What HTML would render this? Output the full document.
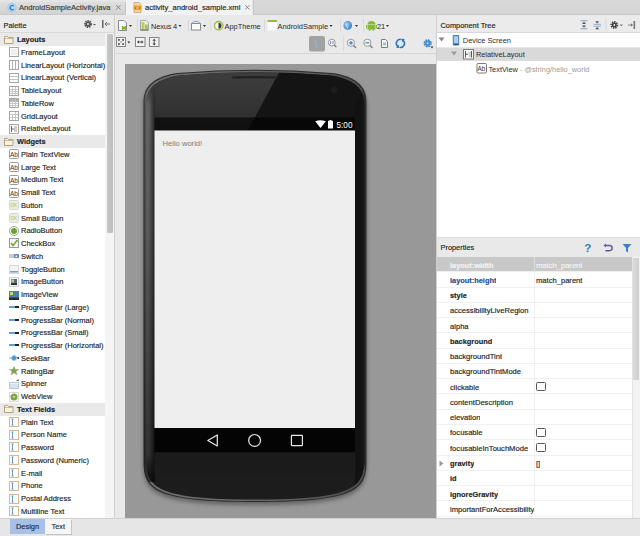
<!DOCTYPE html>
<html><head><meta charset="utf-8">
<style>
*{margin:0;padding:0;box-sizing:border-box}
html,body{width:640px;height:536px;overflow:hidden;background:#e8e8e8;font-family:"Liberation Sans",sans-serif;font-size:7.4px;color:#1e1e1e;-webkit-text-stroke:0.15px currentColor}
.a{position:absolute}
.t{position:absolute;white-space:pre;line-height:10px}
.b{font-weight:bold}
</style></head><body>
<!-- TAB BAR -->
<div class="a" style="left:0;top:0;width:640px;height:15px;background:#e6e6e6"></div>
<div class="a" style="left:0;top:2px;width:126px;height:12.5px;background:linear-gradient(#dedede,#d2d2d2);border-right:1px solid #c4c4c4"></div>
<div class="a" style="left:126px;top:0;width:126px;height:15px;background:#f2f2f2"></div>
<div class="a" style="left:253px;top:0;width:387px;height:14.5px;background:linear-gradient(#dadada,#d4d4d4);border-left:1px solid #c8c8c8;border-bottom-left-radius:2px"></div>
<div class="a" style="left:0;top:14px;width:126px;height:1px;background:#c9c9c9"></div>
<div class="a" style="left:253px;top:14px;width:387px;height:1px;background:#c9c9c9"></div>
<svg class="a" style="left:7px;top:3px" width="10" height="10" viewBox="0 0 10 10"><circle cx="5" cy="4.6" r="4.2" fill="#b4dcf6" stroke="#8cc4ec" stroke-width="0.8"/><path d="M6.7 3.1A2.1 2.1 0 1 0 6.7 6.1" stroke="#3a74b4" stroke-width="1.3" fill="none"/></svg>
<div class="t" style="left:19px;top:2.5px;color:#3a3a3a;font-size:7.6px">AndroidSampleActivity.java</div>
<svg class="a" style="left:115px;top:4px" width="7" height="7" viewBox="0 0 7 7"><path d="M1.2 1.2l4.3 4.3M5.5 1.2l-4.3 4.3" stroke="#7a7a7a" stroke-width="0.9"/></svg>
<svg class="a" style="left:133px;top:2px" width="10" height="11" viewBox="0 0 10 11"><path d="M1 0.5h5l2 2v8h-7z" fill="#f3d9a0" stroke="#b8a078" stroke-width="0.8"/><rect x="0.5" y="3.5" width="8" height="4.5" fill="#f0b040"/><path d="M3.3 4.3l-1.6 1.5l1.6 1.5M5.7 4.3l1.6 1.5l-1.6 1.5" stroke="#c84818" stroke-width="0.9" fill="none"/></svg>
<div class="t" style="left:145px;top:2.5px;color:#222;font-size:7.6px">activity_android_sample.xml</div>
<svg class="a" style="left:243.5px;top:4px" width="7" height="7" viewBox="0 0 7 7"><path d="M1.2 1.2l4.3 4.3M5.5 1.2l-4.3 4.3" stroke="#7a7a7a" stroke-width="0.9"/></svg>

<!-- PALETTE PANEL -->
<div class="a" style="left:0;top:15px;width:114px;height:503px;background:#fff"></div>
<div class="a" style="left:0;top:15px;width:114px;height:18px;background:#ebebeb;border-bottom:1px solid #d8d8d8"></div>
<div class="t" style="left:3.5px;top:20.6px">Palette</div>
<svg class="a" style="left:83px;top:19px" width="14" height="10" viewBox="0 0 14 10"><circle cx="5" cy="5" r="3" fill="none" stroke="#555" stroke-width="2" stroke-dasharray="1.4 0.8"/><circle cx="5" cy="5" r="2.6" fill="#555"/><circle cx="5" cy="5" r="1" fill="#ebebeb"/><path d="M10 5h3l-1.5 1.5z" fill="#555"/></svg>
<svg class="a" style="left:101px;top:19px" width="10" height="10" viewBox="0 0 10 10"><rect x="1" y="1" width="1.5" height="8" fill="#666"/><path d="M4 5h5M4 5l2-2M4 5l2 2" stroke="#666" stroke-width="0.9" fill="none"/></svg>
<div class="a" style="left:105px;top:33px;width:9px;height:485px;background:#f5f5f5"></div>
<div class="a" style="left:107px;top:34px;width:6px;height:199px;background:linear-gradient(90deg,#c8c8c8,#bdbdbd);border-radius:1px"></div>
<div class="a" style="left:0;top:33.00px;width:105px;height:12.75px;background:#e9e9e9"></div>
<svg class="a" style="left:4px;top:36px;" width="10" height="9" viewBox="0 0 10 9"><path d="M0.5 0.5h3l1 1h4.5v6h-8.5z" fill="#f7f2e6" stroke="#b5a27a" stroke-width="1"/><path d="M1 2.5h8" stroke="#cdbb94" stroke-width="1"/></svg>
<div class="t b" style="left:17px;top:35.30px">Layouts</div>
<svg class="a" style="left:9px;top:47px;" width="10" height="10" viewBox="0 0 10 10"><rect x="0.5" y="0.5" width="9" height="9" fill="#fafafa" stroke="#a6a6a6"/><rect x="2" y="2" width="6" height="6" fill="#efefef"/></svg>
<div class="t" style="left:21px;top:47.75px;font-size:7.5px">FrameLayout</div>
<svg class="a" style="left:9px;top:60px;" width="10" height="10" viewBox="0 0 10 10"><rect x="0.5" y="0.5" width="9" height="9" fill="#fff" stroke="#a6a6a6"/><path d="M3.5 1v8M6.5 1v8" stroke="#b4b4b4"/></svg>
<div class="t" style="left:21px;top:60.50px;font-size:7.5px">LinearLayout (Horizontal)</div>
<svg class="a" style="left:9px;top:73px;" width="10" height="10" viewBox="0 0 10 10"><rect x="0.5" y="0.5" width="9" height="9" fill="#fff" stroke="#a6a6a6"/><path d="M1 3.5h8M1 6.5h8" stroke="#c4c4c4"/></svg>
<div class="t" style="left:21px;top:73.25px;font-size:7.5px">LinearLayout (Vertical)</div>
<svg class="a" style="left:9px;top:86px;" width="10" height="10" viewBox="0 0 10 10"><rect x="0.5" y="0.5" width="9" height="9" fill="#fff" stroke="#a6a6a6"/><path d="M1 3.5h8M1 5.5h8M1 7.5h8M3.5 1v8M6.5 1v8" stroke="#c8c8c8"/></svg>
<div class="t" style="left:21px;top:86.00px;font-size:7.5px">TableLayout</div>
<svg class="a" style="left:9px;top:98px;" width="10" height="10" viewBox="0 0 10 10"><rect x="0.5" y="0.5" width="9" height="9" fill="#fff" stroke="#a6a6a6"/><rect x="1" y="1" width="8" height="3" fill="#b0b0b0"/><path d="M1 5.5h8M1 7.5h8M3.5 1v8M6.5 1v8" stroke="#c8c8c8"/></svg>
<div class="t" style="left:21px;top:98.75px;font-size:7.5px">TableRow</div>
<svg class="a" style="left:9px;top:111px;" width="10" height="10" viewBox="0 0 10 10"><rect x="0.5" y="0.5" width="9" height="9" fill="#fff" stroke="#a6a6a6"/><path d="M1 3.5h8M1 6.5h8M3.5 3v6M6.5 1v8" stroke="#c4c4c4"/></svg>
<div class="t" style="left:21px;top:111.50px;font-size:7.5px">GridLayout</div>
<svg class="a" style="left:9px;top:124px;" width="10" height="10" viewBox="0 0 10 10"><rect x="0.5" y="0.5" width="9" height="9" fill="#fff" stroke="#a6a6a6"/><path d="M2.5 2v6M2 5h4" stroke="#666"/><rect x="5" y="2" width="3" height="6" fill="#ccc"/></svg>
<div class="t" style="left:21px;top:124.25px;font-size:7.5px">RelativeLayout</div>
<div class="a" style="left:0;top:135.00px;width:105px;height:12.75px;background:#e9e9e9"></div>
<svg class="a" style="left:4px;top:138px;" width="10" height="9" viewBox="0 0 10 9"><path d="M0.5 0.5h3l1 1h4.5v6h-8.5z" fill="#f7f2e6" stroke="#b5a27a" stroke-width="1"/><path d="M1 2.5h8" stroke="#cdbb94" stroke-width="1"/></svg>
<div class="t b" style="left:17px;top:137.30px">Widgets</div>
<svg class="a" style="left:9px;top:149px;" width="10" height="10" viewBox="0 0 10 10"><rect x="0.5" y="0.5" width="9" height="9" fill="#fff" stroke="#9a9a9a" rx="1"/><text x="1" y="7.5" font-size="6.5" font-family="Liberation Sans" fill="#333">Ab</text></svg>
<div class="t" style="left:21px;top:149.75px;font-size:7.5px">Plain TextView</div>
<svg class="a" style="left:9px;top:162px;" width="10" height="10" viewBox="0 0 10 10"><rect x="0.5" y="0.5" width="9" height="9" fill="#fff" stroke="#9a9a9a" rx="1"/><text x="1" y="7.5" font-size="6.5" font-family="Liberation Sans" fill="#333">Ab</text></svg>
<div class="t" style="left:21px;top:162.50px;font-size:7.5px">Large Text</div>
<svg class="a" style="left:9px;top:175px;" width="10" height="10" viewBox="0 0 10 10"><rect x="0.5" y="0.5" width="9" height="9" fill="#fff" stroke="#9a9a9a" rx="1"/><text x="1" y="7.5" font-size="6.5" font-family="Liberation Sans" fill="#333">Ab</text></svg>
<div class="t" style="left:21px;top:175.25px;font-size:7.5px">Medium Text</div>
<svg class="a" style="left:9px;top:188px;" width="10" height="10" viewBox="0 0 10 10"><rect x="0.5" y="0.5" width="9" height="9" fill="#fff" stroke="#9a9a9a" rx="1"/><text x="1" y="7.5" font-size="6.5" font-family="Liberation Sans" fill="#333">Ab</text></svg>
<div class="t" style="left:21px;top:188.00px;font-size:7.5px">Small Text</div>
<svg class="a" style="left:9px;top:200px;" width="10" height="10" viewBox="0 0 10 10"><rect x="0.5" y="0.5" width="9" height="9" fill="#ebefdc" stroke="#d6d6d6" rx="1"/><text x="1.5" y="7" font-size="4.5" font-family="Liberation Sans" fill="#a9b87a">OK</text></svg>
<div class="t" style="left:21px;top:200.75px;font-size:7.5px">Button</div>
<svg class="a" style="left:9px;top:213px;" width="10" height="10" viewBox="0 0 10 10"><rect x="0.5" y="0.5" width="9" height="9" fill="#ebefdc" stroke="#d6d6d6" rx="1"/><text x="1.5" y="7" font-size="4.5" font-family="Liberation Sans" fill="#a9b87a">OK</text></svg>
<div class="t" style="left:21px;top:213.50px;font-size:7.5px">Small Button</div>
<svg class="a" style="left:9px;top:226px;" width="10" height="10" viewBox="0 0 10 10"><circle cx="5" cy="5" r="4.5" fill="#fff" stroke="#a0a0a0"/><circle cx="5" cy="5" r="3" fill="#6aa52c"/></svg>
<div class="t" style="left:21px;top:226.25px;font-size:7.5px">RadioButton</div>
<svg class="a" style="left:9px;top:238px;" width="10" height="10" viewBox="0 0 10 10"><rect x="0.5" y="0.5" width="9" height="9" fill="#f4f4f4" stroke="#9a9a9a"/><path d="M2 5l2 2.5l4.5-5.5" stroke="#7aa23c" stroke-width="1.6" fill="none"/></svg>
<div class="t" style="left:21px;top:239.00px;font-size:7.5px">CheckBox</div>
<svg class="a" style="left:9px;top:251px;" width="10" height="10" viewBox="0 0 10 10"><rect x="0" y="3" width="5" height="4" fill="#c9c9c9"/><rect x="5" y="3" width="5" height="4" fill="#6b8bc0"/><rect x="6.5" y="4.5" width="1.5" height="1.5" fill="#fff"/></svg>
<div class="t" style="left:21px;top:251.75px;font-size:7.5px">Switch</div>
<svg class="a" style="left:9px;top:264px;" width="10" height="10" viewBox="0 0 10 10"><rect x="0.5" y="1.5" width="9" height="8" fill="#f3f3f3" stroke="#dadada"/><rect x="1" y="7" width="8" height="1.5" fill="#7f9cc8"/></svg>
<div class="t" style="left:21px;top:264.50px;font-size:7.5px">ToggleButton</div>
<svg class="a" style="left:9px;top:277px;" width="10" height="10" viewBox="0 0 10 10"><rect x="0.5" y="0.5" width="9" height="9" fill="#f8f8f8" stroke="#d0d0d0"/><rect x="2" y="2" width="6" height="6" fill="#556b78"/><rect x="2.5" y="2.5" width="2.5" height="3" fill="#c8d27a"/><rect x="2" y="6.5" width="6" height="1.5" fill="#222"/></svg>
<div class="t" style="left:21px;top:277.25px;font-size:7.5px">ImageButton</div>
<svg class="a" style="left:9px;top:290px;" width="10" height="10" viewBox="0 0 10 10"><rect x="0" y="1" width="10" height="9" fill="#4a7fb0"/><rect x="1" y="2" width="3" height="3" fill="#c9d57a"/><rect x="0" y="7.5" width="10" height="2.5" fill="#2a2a2a"/></svg>
<div class="t" style="left:21px;top:290.00px;font-size:7.5px">ImageView</div>
<svg class="a" style="left:9px;top:302px;" width="10" height="10" viewBox="0 0 10 10"><rect x="0" y="4" width="6" height="2" fill="#6a9ad0"/><rect x="6" y="4" width="4" height="2" fill="#222"/></svg>
<div class="t" style="left:21px;top:302.75px;font-size:7.5px">ProgressBar (Large)</div>
<svg class="a" style="left:9px;top:315px;" width="10" height="10" viewBox="0 0 10 10"><rect x="0" y="4" width="6" height="2" fill="#6a9ad0"/><rect x="6" y="4" width="4" height="2" fill="#222"/></svg>
<div class="t" style="left:21px;top:315.50px;font-size:7.5px">ProgressBar (Normal)</div>
<svg class="a" style="left:9px;top:328px;" width="10" height="10" viewBox="0 0 10 10"><rect x="0" y="4" width="6" height="2" fill="#6a9ad0"/><rect x="6" y="4" width="4" height="2" fill="#222"/></svg>
<div class="t" style="left:21px;top:328.25px;font-size:7.5px">ProgressBar (Small)</div>
<svg class="a" style="left:9px;top:340px;" width="10" height="10" viewBox="0 0 10 10"><rect x="0" y="4" width="6" height="2" fill="#6a9ad0"/><rect x="6" y="4" width="4" height="2" fill="#222"/></svg>
<div class="t" style="left:21px;top:341.00px;font-size:7.5px">ProgressBar (Horizontal)</div>
<svg class="a" style="left:9px;top:353px;" width="10" height="10" viewBox="0 0 10 10"><rect x="0" y="4.5" width="10" height="1" fill="#7aa6d6"/><circle cx="5" cy="5" r="2.5" fill="#4a8ed0" stroke="#a8c8e8"/><rect x="8.5" y="4" width="1.5" height="2" fill="#333"/></svg>
<div class="t" style="left:21px;top:353.75px;font-size:7.5px">SeekBar</div>
<svg class="a" style="left:9px;top:366px;" width="10" height="10" viewBox="0 0 10 10"><path d="M5 0.5l1.3 3h3.2l-2.6 2l1 3.3l-2.9-2l-2.9 2l1-3.3l-2.6-2h3.2z" fill="#7ea53a" stroke="#9a9a9a" stroke-width="0.6"/></svg>
<div class="t" style="left:21px;top:366.50px;font-size:7.5px">RatingBar</div>
<svg class="a" style="left:9px;top:379px;" width="10" height="10" viewBox="0 0 10 10"><rect x="0.5" y="3.5" width="9" height="6" fill="#f0f4f8" stroke="#b8c8d8"/><path d="M1 6h8M1 8h8" stroke="#c0d0e0"/><path d="M7.5 1.5h2v-1" stroke="#666" stroke-width="0.8"/></svg>
<div class="t" style="left:21px;top:379.25px;font-size:7.5px">Spinner</div>
<svg class="a" style="left:9px;top:392px;" width="10" height="10" viewBox="0 0 10 10"><rect x="0.5" y="0.5" width="9" height="9" fill="#fff" stroke="#d8d8d8"/><circle cx="5" cy="5" r="3.5" fill="#7fa53e"/><path d="M4 3.5l2 1l-1 2z" fill="#e9f0d8"/></svg>
<div class="t" style="left:21px;top:392.00px;font-size:7.5px">WebView</div>
<div class="a" style="left:0;top:402.75px;width:105px;height:12.75px;background:#e9e9e9"></div>
<svg class="a" style="left:4px;top:405px;" width="10" height="9" viewBox="0 0 10 9"><path d="M0.5 0.5h3l1 1h4.5v6h-8.5z" fill="#f7f2e6" stroke="#b5a27a" stroke-width="1"/><path d="M1 2.5h8" stroke="#cdbb94" stroke-width="1"/></svg>
<div class="t b" style="left:17px;top:405.05px">Text Fields</div>
<svg class="a" style="left:9px;top:417px;" width="10" height="10" viewBox="0 0 10 10"><rect x="0.5" y="0.5" width="9" height="9" fill="#fff" stroke="#d8b890"/><path d="M2.5 2h2M2.5 8h2M3.5 2v6" stroke="#5a8ab8" stroke-width="0.9"/></svg>
<div class="t" style="left:21px;top:417.50px;font-size:7.5px">Plain Text</div>
<svg class="a" style="left:9px;top:430px;" width="10" height="10" viewBox="0 0 10 10"><rect x="0.5" y="0.5" width="9" height="9" fill="#fff" stroke="#d8b890"/><path d="M2.5 2h2M2.5 8h2M3.5 2v6" stroke="#5a8ab8" stroke-width="0.9"/></svg>
<div class="t" style="left:21px;top:430.25px;font-size:7.5px">Person Name</div>
<svg class="a" style="left:9px;top:442px;" width="10" height="10" viewBox="0 0 10 10"><rect x="0.5" y="0.5" width="9" height="9" fill="#fff" stroke="#d8b890"/><path d="M2.5 2h2M2.5 8h2M3.5 2v6" stroke="#5a8ab8" stroke-width="0.9"/></svg>
<div class="t" style="left:21px;top:443.00px;font-size:7.5px">Password</div>
<svg class="a" style="left:9px;top:455px;" width="10" height="10" viewBox="0 0 10 10"><rect x="0.5" y="0.5" width="9" height="9" fill="#fff" stroke="#d8b890"/><path d="M2.5 2h2M2.5 8h2M3.5 2v6" stroke="#5a8ab8" stroke-width="0.9"/></svg>
<div class="t" style="left:21px;top:455.75px;font-size:7.5px">Password (Numeric)</div>
<svg class="a" style="left:9px;top:468px;" width="10" height="10" viewBox="0 0 10 10"><rect x="0.5" y="0.5" width="9" height="9" fill="#fff" stroke="#d8b890"/><path d="M2.5 2h2M2.5 8h2M3.5 2v6" stroke="#5a8ab8" stroke-width="0.9"/></svg>
<div class="t" style="left:21px;top:468.50px;font-size:7.5px">E-mail</div>
<svg class="a" style="left:9px;top:481px;" width="10" height="10" viewBox="0 0 10 10"><rect x="0.5" y="0.5" width="9" height="9" fill="#fff" stroke="#d8b890"/><path d="M2.5 2h2M2.5 8h2M3.5 2v6" stroke="#5a8ab8" stroke-width="0.9"/></svg>
<div class="t" style="left:21px;top:481.25px;font-size:7.5px">Phone</div>
<svg class="a" style="left:9px;top:494px;" width="10" height="10" viewBox="0 0 10 10"><rect x="0.5" y="0.5" width="9" height="9" fill="#fff" stroke="#d8b890"/><path d="M2.5 2h2M2.5 8h2M3.5 2v6" stroke="#5a8ab8" stroke-width="0.9"/></svg>
<div class="t" style="left:21px;top:494.00px;font-size:7.5px">Postal Address</div>
<svg class="a" style="left:9px;top:506px;" width="10" height="10" viewBox="0 0 10 10"><rect x="0.5" y="0.5" width="9" height="9" fill="#fff" stroke="#d8b890"/><path d="M2.5 2h2M2.5 8h2M3.5 2v6" stroke="#5a8ab8" stroke-width="0.9"/></svg>
<div class="t" style="left:21px;top:506.75px;font-size:7.5px">Multiline Text</div>

<!-- DESIGNER -->
<div class="a" style="left:114px;top:15px;width:1px;height:503px;background:#cfcfcf"></div>
<div class="a" style="left:115px;top:15px;width:321px;height:503px;background:#e9e9e9"></div>
<div class="a" style="left:115px;top:53px;width:321px;height:1px;background:#d6d6d6"></div>
<div class="a" style="left:125px;top:64px;width:311px;height:454.5px;background:#989898"></div>
<svg class="a" style="left:115px;top:15px" width="321" height="38" viewBox="115 15 321 38">
<defs>
<radialGradient id="gblue" cx="0.4" cy="0.4" r="0.6"><stop offset="0" stop-color="#9fd0f4"/><stop offset="1" stop-color="#3c82c8"/></radialGradient>
</defs>
<g font-family="Liberation Sans" font-size="7.4" fill="#2a2a2a">
<!-- row1 -->
<path d="M118.5 20.5h5.5l2.5 2.5v7.5h-8z" fill="#f8f8f8" stroke="#8c8c8c"/>
<path d="M122 26.5l4 3M126 26.5l-4 3" stroke="#78b030" stroke-width="1.6"/>
<path d="M129 25h3l-1.5 2z" fill="#333"/>
<rect x="137" y="19" width="1" height="13" fill="#d8d8d8"/>
<path d="M140.5 20.5h5.5l2.5 2.5v7h-8z" fill="#f2f2f2" stroke="#a8a8a8"/>
<rect x="141.5" y="22" width="3" height="7.5" fill="#b4d064"/>
<rect x="145" y="24.5" width="2.8" height="5" fill="#a4c454"/>
<rect x="140.5" y="29.5" width="8" height="1" fill="#606060"/>
<text x="151" y="28.6" letter-spacing="-0.15">Nexus 4</text>
<path d="M178.5 25h3l-1.5 2z" fill="#333"/>
<rect x="188" y="19" width="1" height="13" fill="#d8d8d8"/>
<rect x="191.5" y="23.5" width="9" height="6.5" fill="#fafafa" stroke="#8a8a8a"/>
<path d="M191.5 23.5Q196 19 200.5 23.5" fill="none" stroke="#7aaad8" stroke-width="1"/>
<path d="M203 25h3l-1.5 2z" fill="#333"/>
<rect x="210" y="19" width="1" height="13" fill="#dcdcdc"/>
<circle cx="218.7" cy="25.7" r="4.2" fill="#f2f6e8" stroke="#9ab848" stroke-width="1.3"/>
<path d="M218.5 22.7v6A3 3 0 0 0 218.5 22.7z" fill="#3a3a3a"/>
<text x="224.5" y="28.6">AppTheme</text>
<rect x="264" y="19" width="1" height="13" fill="#d8d8d8"/>
<rect x="267.5" y="20" width="9.5" height="10.5" fill="#fbfbfb"/>
<rect x="267.5" y="20" width="9.5" height="2" fill="#9ab848"/>
<text x="277.5" y="28.6">AndroidSample</text>
<path d="M329.5 25h3l-1.5 2z" fill="#333"/>
<rect x="340" y="19" width="1" height="13" fill="#d8d8d8"/>
<circle cx="347.7" cy="25.4" r="4.3" fill="url(#gblue)"/>
<path d="M345 22.5q2 1 1 3q2 1 1.5 3" stroke="#e8f2fa" stroke-width="0.8" fill="none"/>
<path d="M355 25h3l-1.5 2z" fill="#333"/>
<rect x="363" y="19" width="1" height="13" fill="#d8d8d8"/>
<path d="M367.5 24.5a4 3.6 0 0 1 8 0z" fill="#8ab83a"/>
<rect x="367.5" y="25" width="8" height="4.5" fill="#8ab83a"/>
<rect x="366" y="25" width="1" height="3.5" fill="#8ab83a"/><rect x="376" y="25" width="1" height="3.5" fill="#8ab83a"/>
<rect x="369" y="29" width="1.3" height="2" fill="#8ab83a"/><rect x="372.7" y="29" width="1.3" height="2" fill="#8ab83a"/>
<text x="377" y="28.6">21</text>
<path d="M386 25h3l-1.5 2z" fill="#333"/>
<!-- row2 -->
<rect x="116.5" y="37.5" width="9" height="9" fill="#f2f2f2" stroke="#858585"/>
<path d="M118 39l2.2 0.3l-1.9 1.9z M124 39l-0.3 2.2l-1.9-1.9z M118 45l0.3-2.2l1.9 1.9z M124 45l-2.2-0.3l1.9-1.9z" fill="#444"/>
<path d="M119 40l1.5 1.5M123 40l-1.5 1.5M119 44l1.5-1.5M123 44l-1.5-1.5" stroke="#666" stroke-width="0.7"/>
<path d="M127.3 41.6h3l-1.5 1.8z" fill="#333"/>
<rect x="135.5" y="37.5" width="9.5" height="9" fill="#f2f2f2" stroke="#858585"/>
<path d="M138.5 42h3.5" stroke="#444" stroke-width="0.9"/>
<path d="M137 42l2-1.8v3.6z M143.5 42l-2-1.8v3.6z" fill="#444"/>
<rect x="149.5" y="37.5" width="9.5" height="9" fill="#f2f2f2" stroke="#858585"/>
<path d="M154.2 40.5v3.5" stroke="#444" stroke-width="0.9"/>
<path d="M154.2 38.8l-1.8 2h3.6z M154.2 45.4l-1.8-2h3.6z" fill="#444"/>
<rect x="309" y="36" width="16" height="15.5" rx="2" fill="#a2a2a2"/>
<path d="M315 39.5l2 8" stroke="#8fb6d8" stroke-width="1.6"/>
<circle cx="331.8" cy="42.6" r="3.4" fill="#f6f6f6" stroke="#9a9a9a"/>
<path d="M334.2 45l2.2 2.2" stroke="#777" stroke-width="1.2"/>
<path d="M330.6 41v3M333 41v3" stroke="#5a6ab0" stroke-width="0.8"/>
<rect x="343" y="36" width="1" height="15" fill="#d8d8d8"/>
<circle cx="350.9" cy="42.8" r="3.6" fill="#f4f4f4" stroke="#9a9a9a"/>
<path d="M353.5 45.5l2.5 2.5" stroke="#777" stroke-width="1.2"/>
<path d="M349 42.8h3.8M350.9 40.9v3.8" stroke="#3c7cc8" stroke-width="1.2"/>
<circle cx="367.4" cy="42.8" r="3.6" fill="#f4f4f4" stroke="#9a9a9a"/>
<path d="M370 45.5l2.5 2.5" stroke="#777" stroke-width="1.2"/>
<path d="M365.5 42.8h3.8" stroke="#3c7cc8" stroke-width="1.2"/>
<path d="M381.5 39.5h4l2 2v6h-6z" fill="#f8f8f8" stroke="#7a7a7a"/>
<rect x="383" y="42.5" width="3" height="3" fill="#9cc0e4"/>
<circle cx="400.4" cy="43.4" r="3.2" fill="#d4ecfa"/>
<path d="M400.8 39.4A4 4 0 0 0 397.6 46.3" fill="none" stroke="#3a6ea8" stroke-width="1.5"/>
<path d="M400 47.4A4 4 0 0 0 403.2 40.5" fill="none" stroke="#3a6ea8" stroke-width="1.5"/>
<path d="M396 47.8l3.8 0.2l-1.5-3.2z M404.8 39l-3.8-0.2l1.5 3.2z" fill="#3a6ea8"/>
<circle cx="427.6" cy="43.3" r="3" fill="none" stroke="#3e86cc" stroke-width="2.2" stroke-dasharray="1.6 0.75"/>
<circle cx="427.6" cy="43.3" r="2.8" fill="#4a90d0"/>
<circle cx="427.6" cy="43.3" r="1" fill="#c8e4fa"/>
<path d="M430.5 46.5h3l-1.5 2z" fill="#333"/>
</g>
</svg>

<svg class="a" style="left:125px;top:64px" width="311" height="455" viewBox="125 64 311 455">
<defs>
<linearGradient id="rimg" x1="143" x2="367" y1="0" y2="0" gradientUnits="userSpaceOnUse"><stop offset="0" stop-color="#707070"/><stop offset="0.5" stop-color="#666"/><stop offset="1" stop-color="#4c4c4c"/></linearGradient>

<linearGradient id="lbz" x1="143.5" x2="155" y1="0" y2="0" gradientUnits="userSpaceOnUse">
  <stop offset="0" stop-color="#2e2e2e"/><stop offset="0.12" stop-color="#4a4a4a"/><stop offset="0.3" stop-color="#6a6a6a"/><stop offset="0.55" stop-color="#5a5a5a"/><stop offset="0.8" stop-color="#3a3a3a"/><stop offset="1" stop-color="#262626"/>
</linearGradient>
<linearGradient id="vfade" x1="0" x2="0" y1="0" y2="1">
  <stop offset="0" stop-color="#fff" stop-opacity="0"/><stop offset="0.05" stop-color="#fff" stop-opacity="1"/><stop offset="0.93" stop-color="#fff" stop-opacity="1"/><stop offset="1" stop-color="#fff" stop-opacity="0"/>
</linearGradient>
<mask id="m1"><rect x="140" y="86" width="20" height="396" fill="url(#vfade)"/></mask>
<radialGradient id="shad" cx="0.5" cy="0.5" r="0.5">
  <stop offset="0" stop-color="#000" stop-opacity="0.16"/><stop offset="1" stop-color="#000" stop-opacity="0"/>
</radialGradient>
<clipPath id="body"><path d="M143.5 102C143.5 84 157 76 178 73Q255 66.5 332 73C353 76 366.5 84 366.5 102L366.5 462C366.5 490 355 502 255 502C155 502 143.5 490 143.5 462Z" transform="translate(255 286) scale(0.99552 0.99769) translate(-255 -286)"/></clipPath>
<clipPath id="inner"><path d="M143.5 102C143.5 84 157 76 178 73Q255 66.5 332 73C353 76 366.5 84 366.5 102L366.5 462C366.5 490 355 502 255 502C155 502 143.5 490 143.5 462Z" transform="translate(255 286) scale(0.97758 0.98843) translate(-255 -286)"/></clipPath>
</defs>
<filter id="blur" x="-20%" y="-20%" width="140%" height="140%"><feGaussianBlur stdDeviation="2.2"/></filter><path d="M143.5 102C143.5 84 157 76 178 73Q255 66.5 332 73C353 76 366.5 84 366.5 102L366.5 462C366.5 490 355 502 255 502C155 502 143.5 490 143.5 462Z" fill="#000" opacity="0.35" transform="translate(0 3)" filter="url(#blur)"/>
<path d="M143.5 102C143.5 84 157 76 178 73Q255 66.5 332 73C353 76 366.5 84 366.5 102L366.5 462C366.5 490 355 502 255 502C155 502 143.5 490 143.5 462Z" fill="#2c2c2c"/>
<path d="M143.5 102C143.5 84 157 76 178 73Q255 66.5 332 73C353 76 366.5 84 366.5 102L366.5 462C366.5 490 355 502 255 502C155 502 143.5 490 143.5 462Z" fill="url(#rimg)" transform="translate(255 286) scale(0.99103 0.99537) translate(-255 -286)"/>
<path d="M143.5 102C143.5 84 157 76 178 73Q255 66.5 332 73C353 76 366.5 84 366.5 102L366.5 462C366.5 490 355 502 255 502C155 502 143.5 490 143.5 462Z" fill="#1c1c1c" transform="translate(255 286) scale(0.97758 0.98843) translate(-255 -286)"/>
<g clip-path="url(#inner)">
<linearGradient id="fg" x1="0" x2="0" y1="76" y2="130" gradientUnits="userSpaceOnUse"><stop offset="0" stop-color="#3c3c3c"/><stop offset="0.5" stop-color="#353535"/><stop offset="1" stop-color="#2a2a2a"/></linearGradient>
<path d="M140 70H280.5L248 130.5H140Z" fill="url(#fg)"/>
<path d="M280.5 70H370V130.5H248Z" fill="#141414"/>
<rect x="355" y="100" width="12" height="400" fill="#121212"/>
</g>
<linearGradient id="rg" x1="362" x2="367" y1="0" y2="0" gradientUnits="userSpaceOnUse"><stop offset="0" stop-color="#121212"/><stop offset="0.6" stop-color="#202020"/><stop offset="1" stop-color="#505050"/></linearGradient>
<linearGradient id="vf2" x1="0" x2="0" y1="86" y2="470" gradientUnits="userSpaceOnUse"><stop offset="0" stop-color="#fff" stop-opacity="0"/><stop offset="0.05" stop-color="#fff" stop-opacity="1"/><stop offset="0.98" stop-color="#fff" stop-opacity="1"/><stop offset="1" stop-color="#fff" stop-opacity="0"/></linearGradient><mask id="m2"><rect x="355" y="86" width="15" height="384" fill="url(#vf2)"/></mask>
<g clip-path="url(#body)"><rect x="362" y="86" width="5" height="384" fill="url(#rg)" mask="url(#m2)"/></g>
<path d="M232 76.6Q256 75.6 278 76.6L277.5 78.6Q256 77.8 232.5 78.6Z" fill="#222"/>
<circle cx="334" cy="90" r="3.2" fill="#1c1c1c"/>
<linearGradient id="dk" x1="0" x2="0" y1="86" y2="482" gradientUnits="userSpaceOnUse"><stop offset="0" stop-color="#000" stop-opacity="0"/><stop offset="0.35" stop-color="#000" stop-opacity="0.1"/><stop offset="1" stop-color="#000" stop-opacity="0.55"/></linearGradient>
<g clip-path="url(#body)"><rect x="143.5" y="86" width="11.5" height="396" fill="url(#lbz)" mask="url(#m1)"/><rect x="143.5" y="86" width="11.5" height="396" fill="url(#dk)"/></g>
<rect x="154.5" y="117.5" width="200.5" height="13" fill="#000" opacity="0.62"/>
<rect x="154.5" y="130.5" width="200.5" height="297.5" fill="#eeeeee"/>
<rect x="154.5" y="428" width="200.5" height="24.5" fill="#040404"/>
<path d="M154.5 452.5H355V475H154.5Z" fill="#1b1b1b"/>
<path d="M315.2 121.2Q320.5 119.3 325.8 121.2L320.5 128Z" fill="#fff"/>
<rect x="328" y="120.8" width="5" height="7.7" fill="#fff"/><rect x="329.5" y="120" width="2" height="1" fill="#fff"/>
<text x="336.5" y="128" font-size="8.2" font-family="Liberation Sans" fill="#fff">5:00</text>
<path d="M217.3 435L217.3 446L207.8 440.5Z" fill="none" stroke="#e8e8e8" stroke-width="1.2" stroke-linejoin="round"/>
<circle cx="254.6" cy="440.4" r="5.9" fill="none" stroke="#e8e8e8" stroke-width="1.2"/>
<rect x="291.4" y="435.4" width="11" height="10.2" rx="0.5" fill="none" stroke="#e8e8e8" stroke-width="1.2"/>
<text x="162.5" y="146" font-size="7.6" font-family="Liberation Sans" fill="#7a7a7a">Hello world!</text>
</svg>


<!-- RIGHT PANEL -->
<div class="a" style="left:436px;top:15px;width:1px;height:503px;background:#cfcfcf"></div>
<div class="a" style="left:437px;top:15px;width:203px;height:503px;background:#fff"></div>
<div class="a" style="left:437px;top:15px;width:203px;height:18px;background:#ebebeb;border-bottom:1px solid #d8d8d8"></div>
<div class="t" style="left:440.5px;top:21px">Component Tree</div>
<svg class="a" style="left:437px;top:15px" width="203" height="60" viewBox="437 15 203 60">
<g font-family="Liberation Sans" font-size="7.4" fill="#2a2a2a">
<!-- header icons -->
<path d="M580.5 20.8h7M580.5 28.8h7" stroke="#8aa8c4" stroke-width="1.1"/>
<path d="M584 21.8l-2 2.3h4z M584 27.8l-2-2.3h4z" fill="#555"/>
<path d="M593.5 24.3h7.5M593.5 26.2h7.5" stroke="#8ab0d4" stroke-width="1"/>
<path d="M597.2 23.5l-2-2.3h4z M597.2 27l-2 2.3h4z" fill="#555"/>
<rect x="605.5" y="19" width="1" height="12" fill="#d8d8d8"/>
<circle cx="614.3" cy="25" r="2.9" fill="none" stroke="#444" stroke-width="2.1" stroke-dasharray="1.3 0.9"/>
<circle cx="614.3" cy="25" r="2.5" fill="#444"/><circle cx="614.3" cy="25" r="0.9" fill="#ebebeb"/>
<path d="M619.8 24.6h3l-1.5 1.6z" fill="#666"/>
<path d="M628 25h4" stroke="#777" stroke-width="0.9"/><path d="M633 25l-2-1.8v3.6z" fill="#777"/>
<rect x="633.5" y="21" width="1.6" height="8" fill="#777"/>
<!-- rows -->
<rect x="437" y="47.4" width="203" height="13.5" fill="#d9d9d9"/>
<path d="M438.5 37.5h6l-3 4z" fill="#8a8a8a"/>
<rect x="452.8" y="35" width="6.4" height="10.5" rx="0.8" fill="#4d7fb2"/>
<rect x="453.8" y="36.2" width="4.4" height="7" fill="#a6d2f2"/><rect x="453.8" y="44" width="4.4" height="0.8" fill="#2a4a6a"/>
<text x="462.8" y="43.3">Device Screen</text>
<path d="M451 51.5h6l-3 4z" fill="#9a9a9a"/>
<rect x="463.5" y="49.5" width="10" height="9.5" fill="#fafafa" stroke="#7a7a7a"/>
<path d="M465.5 51v6.5M465.5 54.2h2.5M471.5 51v6.5" stroke="#444" stroke-width="0.9"/>
<rect x="468.5" y="51.5" width="2.5" height="5.5" fill="#d0d0d0"/>
<text x="475.9" y="57.4">RelativeLayout</text>
<rect x="477" y="63.5" width="9.5" height="9.5" rx="1" fill="#fff" stroke="#7a7a7a"/>
<text x="477.6" y="70.8" font-size="6.3" fill="#333">Ab</text>
<text x="488.4" y="71.5">TextView<tspan fill="#9a9a9a"> - @string/hello_world</tspan></text>
</g>
</svg>

<div class="a" style="left:437px;top:237px;width:203px;height:20px;background:#e9e9e9;border-top:1px solid #dedede"></div>
<div class="t" style="left:440.5px;top:242.5px">Properties</div>
<svg class="a" style="left:580px;top:240px" width="60" height="16" viewBox="580 240 60 16">
<text x="584.3" y="252.3" font-family="Liberation Sans" font-size="11.5" font-weight="bold" fill="#3a7cc4">?</text>
<path d="M605 245.5h4.5a2.6 2.6 0 0 1 0 5.2h-4" fill="none" stroke="#5a5aa0" stroke-width="1.4"/>
<path d="M603.5 245.5l2.5-2v4z" fill="#5a5aa0"/>
<path d="M622.5 244h9l-3.5 4v4.5l-2-1.5v-3z" fill="#3a80c8"/>
</svg>

<div class="a" style="left:632px;top:257px;width:8px;height:261px;background:#f2f2f2;border-left:1px solid #e2e2e2"></div>
<div class="a" style="left:633px;top:258px;width:6px;height:122px;background:linear-gradient(90deg,#dadada,#cfcfcf)"></div>
<div class="a" style="left:437px;top:257.00px;width:195px;height:15.27px;background:#c8c8c8"></div>
<div class="a" style="left:437px;top:271.27px;width:195px;height:1px;background:#f0f0f0"></div>
<div class="t" style="left:450px;top:260.50px;color:#f4f4f4;font-weight:bold;max-width:84px;overflow:hidden;font-size:7.4px">layout:width</div>
<div class="t" style="left:536px;top:260.50px;color:#f4f4f4;font-size:7.6px">match_parent</div>
<div class="a" style="left:437px;top:286.54px;width:195px;height:1px;background:#f0f0f0"></div>
<div class="t" style="left:450px;top:275.77px;color:#1e4a96;font-weight:bold;max-width:84px;overflow:hidden;font-size:7.4px">layout:height</div>
<div class="t" style="left:536px;top:275.77px;color:#222;font-size:7.6px">match_parent</div>
<div class="a" style="left:437px;top:301.81px;width:195px;height:1px;background:#f0f0f0"></div>
<div class="t" style="left:450px;top:291.04px;color:#222;font-weight:bold;max-width:84px;overflow:hidden;font-size:7.4px">style</div>
<div class="a" style="left:437px;top:317.08px;width:195px;height:1px;background:#f0f0f0"></div>
<div class="t" style="left:450px;top:306.31px;color:#222;font-weight:normal;max-width:84px;overflow:hidden;font-size:7.6px">accessibilityLiveRegion</div>
<div class="a" style="left:437px;top:332.35px;width:195px;height:1px;background:#f0f0f0"></div>
<div class="t" style="left:450px;top:321.58px;color:#222;font-weight:normal;max-width:84px;overflow:hidden;font-size:7.6px">alpha</div>
<div class="a" style="left:437px;top:347.62px;width:195px;height:1px;background:#f0f0f0"></div>
<div class="t" style="left:450px;top:336.85px;color:#222;font-weight:bold;max-width:84px;overflow:hidden;font-size:7.4px">background</div>
<div class="a" style="left:437px;top:362.89px;width:195px;height:1px;background:#f0f0f0"></div>
<div class="t" style="left:450px;top:352.12px;color:#222;font-weight:normal;max-width:84px;overflow:hidden;font-size:7.6px">backgroundTint</div>
<div class="a" style="left:437px;top:378.16px;width:195px;height:1px;background:#f0f0f0"></div>
<div class="t" style="left:450px;top:367.39px;color:#222;font-weight:normal;max-width:84px;overflow:hidden;font-size:7.6px">backgroundTintMode</div>
<div class="a" style="left:437px;top:393.43px;width:195px;height:1px;background:#f0f0f0"></div>
<div class="t" style="left:450px;top:382.66px;color:#222;font-weight:normal;max-width:84px;overflow:hidden;font-size:7.6px">clickable</div>
<div class="a" style="left:536px;top:382px;width:9.8px;height:9px;border:1px solid #585858;background:#fff;border-radius:1.5px"></div>
<div class="a" style="left:437px;top:408.70px;width:195px;height:1px;background:#f0f0f0"></div>
<div class="t" style="left:450px;top:397.93px;color:#222;font-weight:normal;max-width:84px;overflow:hidden;font-size:7.6px">contentDescription</div>
<div class="a" style="left:437px;top:423.97px;width:195px;height:1px;background:#f0f0f0"></div>
<div class="t" style="left:450px;top:413.20px;color:#222;font-weight:normal;max-width:84px;overflow:hidden;font-size:7.6px">elevation</div>
<div class="a" style="left:437px;top:439.24px;width:195px;height:1px;background:#f0f0f0"></div>
<div class="t" style="left:450px;top:428.47px;color:#222;font-weight:normal;max-width:84px;overflow:hidden;font-size:7.6px">focusable</div>
<div class="a" style="left:536px;top:428px;width:9.8px;height:9px;border:1px solid #585858;background:#fff;border-radius:1.5px"></div>
<div class="a" style="left:437px;top:454.51px;width:195px;height:1px;background:#f0f0f0"></div>
<div class="t" style="left:450px;top:443.74px;color:#222;font-weight:normal;max-width:84px;overflow:hidden;font-size:7.6px">focusableInTouchMode</div>
<div class="a" style="left:536px;top:443px;width:9.8px;height:9px;border:1px solid #585858;background:#fff;border-radius:1.5px"></div>
<div class="a" style="left:437px;top:469.78px;width:195px;height:1px;background:#f0f0f0"></div>
<div class="t" style="left:450px;top:459.01px;color:#222;font-weight:bold;max-width:84px;overflow:hidden;font-size:7.4px">gravity</div>
<div class="t" style="left:536px;top:459.01px;color:#222;font-size:7.6px">[]</div>
<svg class="a" style="left:439px;top:460px;" width="5" height="7" viewBox="0 0 5 7"><path d="M0.5 0.5l4 3l-4 3z" fill="#9a9a9a"/></svg>
<div class="a" style="left:437px;top:485.05px;width:195px;height:1px;background:#f0f0f0"></div>
<div class="t" style="left:450px;top:474.28px;color:#222;font-weight:bold;max-width:84px;overflow:hidden;font-size:7.4px">id</div>
<div class="a" style="left:437px;top:500.32px;width:195px;height:1px;background:#f0f0f0"></div>
<div class="t" style="left:450px;top:489.55px;color:#222;font-weight:bold;max-width:84px;overflow:hidden;font-size:7.4px">ignoreGravity</div>
<div class="a" style="left:437px;top:515.59px;width:195px;height:1px;background:#f0f0f0"></div>
<div class="t" style="left:450px;top:504.82px;color:#222;font-weight:normal;max-width:84px;overflow:hidden;font-size:7.6px">importantForAccessibility</div>
<div class="a" style="left:534px;top:272.27px;width:1px;height:244.3px;background:#f0f0f0"></div>
<div class="a" style="left:534px;top:257px;width:1px;height:15.27px;background:#dedede"></div>

<!-- BOTTOM BAR -->
<div class="a" style="left:0;top:518px;width:640px;height:18px;background:#e6e6e6;border-top:1px solid #d0d0d0"></div>
<div class="a" style="left:10px;top:519px;width:35px;height:15px;background:#a8c0e6"></div>
<div class="a" style="left:45px;top:519px;width:26px;height:15px;background:#f5f5f5;box-shadow:1px 1px 0 #c4c4c4"></div>
<div class="t" style="left:16px;top:522px;color:#1e2a3e">Design</div>
<div class="t" style="left:51.5px;top:522px;color:#333">Text</div>
</body></html>
